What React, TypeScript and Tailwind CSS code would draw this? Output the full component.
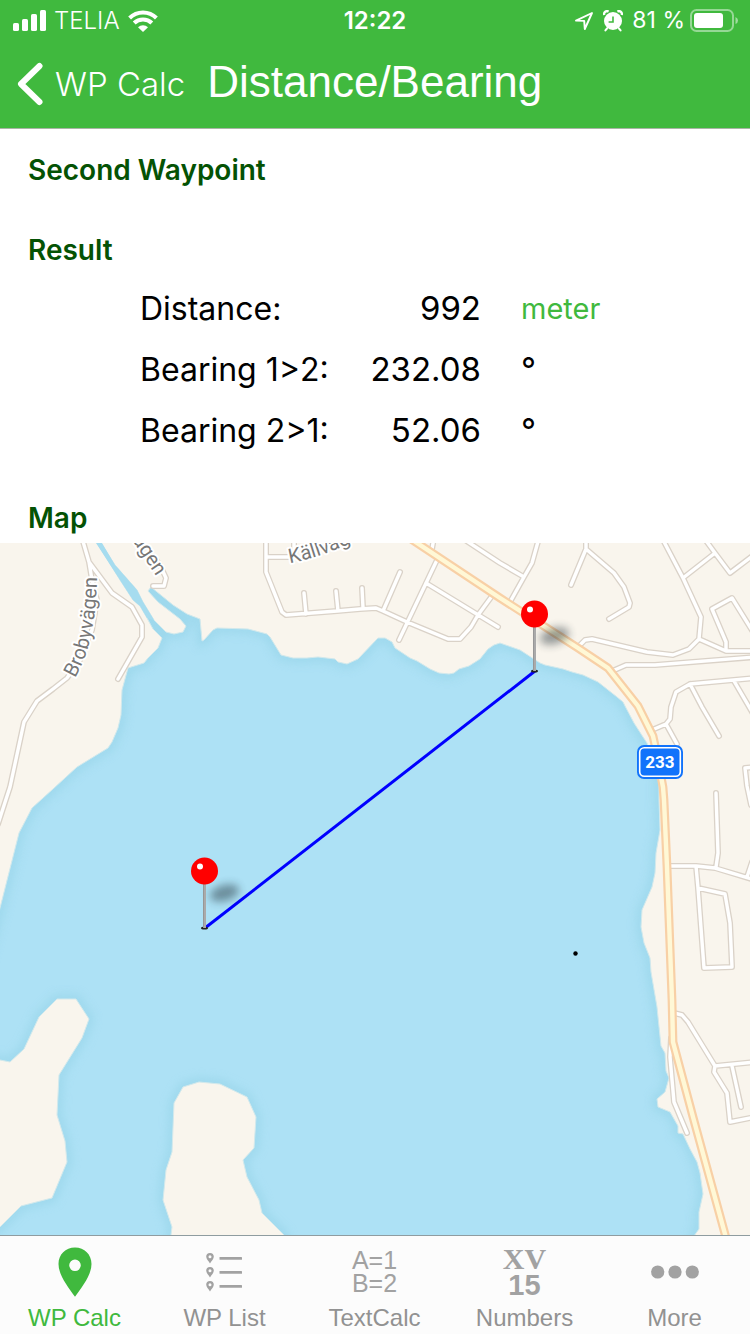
import React from "react";

const WATER =
  "M97 543 L101 543 L115 565 L137 590 L143 602 L154 620 L166 632 L174 634 L183 632 L186 626 L180 619 L158 602 L148 591 L151 587 L173 605 L187 614 L200 619 L202 641 L204 640 L213 630 L217 628 L248 629 L267 634 L270 637 L281 655 L293 658 L307 658 L318 657 L335 659 L338 662 L347 664 L358 659 L378 638 L385 638 L392 642 L395 648 L410 658 L417 661 L430 669 L439 673 L449 674 L454 673 L459 669 L469 666 L480 659 L488 649 L494 645 L500 643 L520 650 L540 663 L545 665 L563 669 L572 672 L583 675 L598 682 L617 697 L623 702 L625 706 L634 723 L643 737 L647 743 L657 770 L659 780 L659 800 L660 830 L656 853 L655 873 L652 887 L642 910 L641 927 L644 943 L650 958 L651 972 L657 1007 L661 1046 L665 1053 L666 1071 L669 1078 L665 1092 L657 1099 L658 1107 L670 1112 L678 1126 L678 1133 L683 1134 L690 1149 L697 1162 L700 1173 L703 1194 L699 1212 L699 1229 L694 1236 L694 1260 L-20 1260 L-20 980 L0 908 L19 833 L32 808 L53 789 L77 767 L108 748 L112 742 L118 728 L121 715 L122 690 L128 668 L144 663 L148 658 L158 648 L162 638 L153 629 L147 618 L140 606 L133 600 L120 580 Z";

const ISLANDS =
  "M-20 1060 L0 1060 L10 1062 L24 1049 L39 1017 L57 999 L76 999 L89 1019 L82 1038 L59 1075 L57 1115 L65 1141 L67 1162 L52 1198 L21 1206 L0 1227 L-20 1240 Z M171 1260 L171 1235 L172 1227 L163 1200 L166 1170 L172 1152 L174 1103 L183 1087 L199 1082 L220 1084 L247 1097 L256 1117 L254 1148 L243 1160 L247 1177 L259 1200 L262 1213 L270 1221 L284 1235 L284 1260 Z";

const STREETS = [
  "M82 538 L89 562 L112 593 L132 607 L142 625 L142 637 L118 679",
  "M89 562 L92 580 L97 600 L92 630 L80 660 L67 678 L53 689 L37 701 L24 722 L10 787 L-2 824",
  "M155 558 L160 565 L166 578 L164 586 L153 586",
  "M266 538 L266 572 L282 612 L286 615 L337 611 L360 609 L376 608 L383 611 L407 622 L448 639 L460 639 L471 627 L478 615 L492 596",
  "M266 557 L290 557",
  "M294 538 L294 551",
  "M304 593 L306 614",
  "M336 591 L338 611",
  "M362 588 L363 608",
  "M400 572 L383 611",
  "M399 640 L437 560",
  "M432 549 L434 538",
  "M426 583 L498 627",
  "M462 538 L500 563 L524 577",
  "M539 538 L532 563 L524 577 L510 602",
  "M586 538 L586 549 L571 585",
  "M586 549 L614 573 L624 587 L630 603 L629 607 L609 619",
  "M662 538 L683 578 L701 617 L699 639 L689 649 L673 655 L647 652 L592 639 L585 640 L577 648",
  "M683 578 L715 553",
  "M704 538 L715 553 L730 573 L755 554",
  "M699 639 L726 651 L755 651",
  "M726 651 L726 642 L712 609 L732 598 L755 635",
  "M610 672 L626 665 L655 665 L755 657",
  "M652 730 L666 724 L670 719 L671 707 L676 692 L690 684 L755 678",
  "M666 724 L677 744",
  "M690 684 L702 707 L719 736",
  "M734 681 L755 717",
  "M755 767 L745 768 L747 786 L751 805",
  "M669 866 L696 866 L715 868 L755 880",
  "M752 862 L747 877",
  "M716 793 L718 853 L716 867",
  "M696 866 L698 888 L704 968 L732 967 L730 923 L725 894 L698 888",
  "M674 1013 L682 1015 L688 1022 L715 1066 L755 1062",
  "M715 1066 L714 1072 L727 1093 L730 1122 L755 1117",
  "M732 1066 L741 1107",
  "M671 1038 L670 1057 L674 1102 L687 1133",
].join(" ");

const HIGHWAY =
  "M405 535 L500 598 L578 648 L608 668 L638 706 L653 736 L656 750 L663 787 L664 800 L667 867 L672 1000 L673 1042 L693 1117 L728 1245";

function Pin({ x, y }: { x: number; y: number }) {
  return (
    <g transform={`translate(${x} ${y})`}>
      <ellipse cx="20" cy="-35" rx="15" ry="8" transform="rotate(-16 20 -35)" fill="#1f2b30" opacity="0.45" filter="url(#pin-shadow)" />
      <ellipse cx="0" cy="0" rx="3.5" ry="1.6" fill="#222" />
      <rect x="-1.5" y="-46" width="3" height="46" fill="#aaaaaa" />
      <rect x="-1.5" y="-46" width="1" height="46" fill="#979797" />
      <circle cx="0" cy="-57" r="13.5" fill="#ff0000" />
      <circle cx="-4.5" cy="-61.5" r="3" fill="#ffffff" />
    </g>
  );
}

function WaypointMap() {
  return (
    <svg
      className="block w-full flex-1 bg-[#f9f5ed]"
      viewBox="0 543 750 692"
      preserveAspectRatio="xMidYMid slice"
      role="img"
      aria-label="Map"
    >
      <defs>
        <filter id="pin-shadow" x="-50%" y="-100%" width="200%" height="300%">
          <feGaussianBlur stdDeviation="4.5" />
        </filter>
        <filter id="shore-blur" x="-5%" y="-5%" width="110%" height="110%">
          <feGaussianBlur stdDeviation="5" />
        </filter>
        <clipPath id="water-clip">
          <path d={WATER} />
        </clipPath>
        <path id="broby-path" d="M75 678 Q97 642 97 570" />
        <path id="kallva-path" d="M290 563 Q320 558 362 538" />
        <path id="agen-path" d="M127 532 L166 591" />
      </defs>
      <path d={WATER} fill="#ade1f5" />
      <g clipPath="url(#water-clip)">
        <path d={WATER} fill="none" stroke="#93d2e6" strokeWidth="9" opacity="0.6" filter="url(#shore-blur)" />
        <path d={ISLANDS} fill="none" stroke="#93d2e6" strokeWidth="9" opacity="0.6" filter="url(#shore-blur)" />
      </g>
      <path d={ISLANDS} fill="#f9f5ed" stroke="#d3e9ec" strokeWidth="1" />
      <path d={WATER} fill="none" stroke="#d3e9ec" strokeWidth="1" />
      <path d="M96 543 L120 580 L133 600 L140 606 L147 618 L154 620 L143 602 L137 590 L115 565 L102 543 Z" fill="#a6dcef" />
      <g fill="none" strokeLinecap="round" strokeLinejoin="round">
        <path d={STREETS} stroke="#dad2c8" strokeWidth="6" />
        <path d={STREETS} stroke="#ffffff" strokeWidth="3.4" />
        <path d={HIGHWAY} stroke="#f8d0a6" strokeWidth="8.8" />
        <path d={HIGHWAY} stroke="#fff8d6" strokeWidth="4.4" />
      </g>
      <g
        className="font-['Roboto','Noto_Sans',sans-serif]"
        fontSize="20"
        fill="#777777"
        stroke="#ffffff"
        strokeWidth="4"
        strokeLinejoin="round"
        paintOrder="stroke"
      >
        <text><textPath href="#broby-path">Brobyvägen</textPath></text>
        <text><textPath href="#kallva-path">Källväg</textPath></text>
        <text><textPath href="#agen-path">vägen</textPath></text>
      </g>
      <rect x="637" y="745" width="46" height="34" rx="7" fill="#1273fb" />
      <rect x="639.7" y="747.7" width="40.6" height="28.6" rx="4.5" fill="none" stroke="#ffffff" strokeWidth="1.6" />
      <text x="660" y="768" textAnchor="middle" className="font-['Roboto',sans-serif]" fontSize="17" fontWeight="700" fill="#ffffff">
        233
      </text>
      <path d="M205 928 L535 671" stroke="#0000ff" strokeWidth="3" />
      <Pin x={204.5} y={928} />
      <Pin x={534.5} y={671} />
      <circle cx="575.5" cy="953.5" r="2.2" fill="#000000" />
    </svg>
  );
}

function StatusBar() {
  return (
    <div className="grid h-10 grid-cols-3 items-center px-3 pt-px font-['Inter','Noto_Sans',sans-serif] text-[23px] leading-none">
      <div className="flex items-center gap-2">
        <svg className="h-[22px] w-[34px]" viewBox="0 0 34 22" fill="#fff" aria-hidden="true">
          <rect x="1" y="13" width="6" height="8" rx="1.6" />
          <rect x="10" y="9" width="6" height="12" rx="1.6" />
          <rect x="19" y="4" width="6" height="17" rx="1.6" />
          <rect x="28" y="0" width="6" height="21" rx="1.6" />
        </svg>
        <span className="text-[24px] font-light">TELIA</span>
        <svg className="h-[22px] w-[30px]" viewBox="0 0 30 22" aria-hidden="true">
          <g fill="none" stroke="#fff" strokeWidth="4">
            <path d="M1.6 8 A19 19 0 0 1 28.4 8" />
            <path d="M6.2 13 A12.5 12.5 0 0 1 23.8 13" />
          </g>
          <path d="M15 22 L10 17.2 A7.2 7.2 0 0 1 20 17.2 Z" fill="#fff" />
        </svg>
      </div>
      <span className="text-center text-[24px] font-semibold">12:22</span>
      <div className="flex items-center justify-end gap-[5px]">
        <svg className="h-[20px] w-[20px]" viewBox="0 0 20 20" fill="none" stroke="#fff" strokeWidth="1.9" strokeLinejoin="round" aria-hidden="true">
          <path d="M18 2 L2 9.6 L10.2 9.9 L10.8 18 Z" />
        </svg>
        <svg className="mx-1 h-[22px] w-[20px]" viewBox="0 0 20 22" aria-hidden="true">
          <circle cx="10" cy="11" r="9" fill="#fff" />
          <path d="M1.2 5 A3 3 0 0 1 5.6 1.6 M18.8 5 A3 3 0 0 0 14.4 1.6" fill="none" stroke="#fff" strokeWidth="2.4" />
          <path d="M4 18.5 L2.4 20.4 M16 18.5 L17.6 20.4" stroke="#fff" strokeWidth="2" strokeLinecap="round" />
          <path d="M10 6.5 V12 H5.6" fill="none" stroke="#40b93e" strokeWidth="1.6" />
        </svg>
        <span className="whitespace-nowrap">81 %</span>
        <svg className="h-[24px] w-[48px]" viewBox="0 0 48 24" aria-hidden="true">
          <rect x="1" y="1" width="42" height="21" rx="5.5" fill="none" stroke="#fff" strokeOpacity="0.45" strokeWidth="2" />
          <rect x="4" y="4" width="29" height="15" rx="3" fill="#fff" />
          <path d="M45.5 8 Q48 9 48 11.5 T45.5 15 Z" fill="#fff" fillOpacity="0.5" />
        </svg>
      </div>
    </div>
  );
}

function TabIconPin() {
  return (
    <svg className="h-[50px] w-[34px]" viewBox="0 0 34 50" aria-hidden="true">
      <path
        fillRule="evenodd"
        fill="#40b93e"
        d="M17 0.5 C26.5 0.5 33.5 7.5 33.5 17 C33.5 28 24 40 17 49.7 C10 40 0.5 28 0.5 17 C0.5 7.5 7.5 0.5 17 0.5 Z M17 12.5 A5.8 5.8 0 1 0 17 24.1 A5.8 5.8 0 1 0 17 12.5 Z"
      />
    </svg>
  );
}

function TabIconList() {
  return (
    <svg className="h-[40px] w-[38px]" viewBox="0 0 38 40" fill="#a2a2a2" aria-hidden="true">
      {[0, 14, 28].map((y) => (
        <g key={y} transform={`translate(0 ${y})`}>
          <path
            fillRule="evenodd"
            d="M4 1 C6.5 1 7.8 2.6 7.8 4.6 C7.8 7 5.6 9 4 11.4 C2.4 9 0.2 7 0.2 4.6 C0.2 2.6 1.5 1 4 1 Z M4 3.2 A1.5 1.5 0 1 0 4 6.2 A1.5 1.5 0 1 0 4 3.2 Z"
          />
          <rect x="13.5" y="5" width="22.5" height="2.8" rx="0.6" />
        </g>
      ))}
    </svg>
  );
}

function TabIconMore() {
  return (
    <svg className="h-[14px] w-[48px]" viewBox="0 0 48 14" fill="#a2a2a2" aria-hidden="true">
      <circle cx="6.7" cy="7" r="6.6" />
      <circle cx="24" cy="7" r="6.6" />
      <circle cx="41.3" cy="7" r="6.6" />
    </svg>
  );
}

const TABS: { label: string; icon: React.ReactNode }[] = [
  { label: "WP Calc", icon: <TabIconPin /> },
  { label: "WP List", icon: <TabIconList /> },
  {
    label: "TextCalc",
    icon: (
      <span className="flex flex-col text-left text-[25px] leading-[23px] text-[#a2a2a2]">
        <span>A=1</span>
        <span>B=2</span>
      </span>
    ),
  },
  {
    label: "Numbers",
    icon: (
      <span className="flex flex-col items-center text-[#a2a2a2]">
        <span className="font-['Liberation_Serif',serif] text-[30px] font-bold leading-[26px]">XV</span>
        <span className="text-[29px] font-bold leading-[26px]">15</span>
      </span>
    ),
  },
  { label: "More", icon: <TabIconMore /> },
];

const RESULTS = [
  { label: "Distance:", value: "992", unit: "meter" },
  { label: "Bearing 1>2:", value: "232.08", unit: "°" },
  { label: "Bearing 2>1:", value: "52.06", unit: "°" },
];

export default function App() {
  return (
    <div className="flex min-h-screen flex-col bg-white font-['Liberation_Sans',sans-serif]">
      <header className="border-b border-[#a9b5a6] bg-[#40b93e] text-white">
        <StatusBar />
        <div className="flex h-[88px] items-center gap-[22px] pl-4">
          <button type="button" className="flex items-center gap-[11px] font-['Inter','Noto_Sans',sans-serif] text-[33px] font-light leading-10">
            <svg className="h-[44px] w-[28px]" viewBox="0 0 28 44" fill="none" stroke="#fff" strokeWidth="6" strokeLinecap="round" strokeLinejoin="round" aria-hidden="true">
              <path d="M23.5 4 L5 22 L23.5 40" />
            </svg>
            WP Calc
          </button>
          <h1 className="pb-1 text-[44px] leading-[50px]">Distance/Bearing</h1>
        </div>
      </header>

      <main className="flex flex-1 flex-col font-['Inter','Noto_Sans',sans-serif] text-black">
        <h2 className="px-7 pt-[21px] text-[28px] font-semibold leading-10 text-[#045204]">Second Waypoint</h2>
        <h2 className="px-7 pt-10 text-[28px] font-semibold leading-10 text-[#045204]">Result</h2>
        <table className="ml-[140px] mt-2 w-[480px] text-[33px] leading-[61px]">
          <tbody>
            {RESULTS.map((row) => (
              <tr key={row.label}>
                <th scope="row" className="w-[200px] whitespace-nowrap text-left text-[32px] font-normal">{row.label}</th>
                <td className="w-[141px] text-right">{row.value}</td>
                <td className="pl-10">
                  {row.unit === "meter" ? (
                    <button type="button" className="block text-[29px] text-[#40b93e]">{row.unit}</button>
                  ) : (
                    row.unit
                  )}
                </td>
              </tr>
            ))}
          </tbody>
        </table>
        <h2 className="px-7 pb-[5px] pt-[37px] text-[28px] font-semibold leading-10 text-[#045204]">Map</h2>
        <WaypointMap />
      </main>

      <nav className="grid h-[99px] grid-cols-5 border-t border-[#8f9ca0] bg-[#fcfcfc]">
        {TABS.map((tab, i) => (
          <a key={tab.label} href="#" className={i === 0 ? "flex flex-col items-center pr-px text-[#40b93e]" : "flex flex-col items-center pr-px text-[#929292]"}>
            <span className="flex h-[71px] items-center justify-center">{tab.icon}</span>
            <span className="text-[24px] leading-[22px]">{tab.label}</span>
          </a>
        ))}
      </nav>
    </div>
  );
}
